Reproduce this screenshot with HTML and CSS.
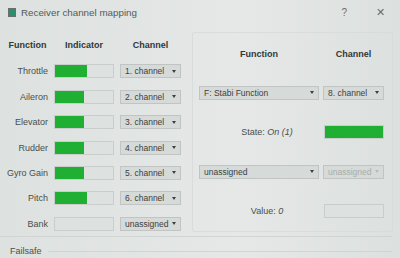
FILE: index.html
```html
<!DOCTYPE html>
<html lang="en">
<head>
    <meta charset="UTF-8">
    <title>Receiver channel mapping</title>
    <link rel="stylesheet" href="styles.css">
</head>
<body>
    <div class="window">
        <!-- Title bar -->
        <div class="titlebar">
            <span class="app-icon"></span>
            <span class="title">Receiver channel mapping</span>
            <span class="tb-btn help">?</span>
            <span class="tb-btn close">&#x2715;</span>
        </div>

        <div class="content">
            <!-- Channel mapping -->
            <div class="mapping">
                <div class="head">Function</div>
                <div class="head">Indicator</div>
                <div class="head">Channel</div>

                <div class="label">Throttle</div>
                <div class="bar"><div class="fill" style="width: 55%"></div></div>
                <div class="combo"><span>1. channel</span><i></i></div>

                <div class="label">Aileron</div>
                <div class="bar"><div class="fill" style="width: 50%"></div></div>
                <div class="combo"><span>2. channel</span><i></i></div>

                <div class="label">Elevator</div>
                <div class="bar"><div class="fill" style="width: 50%"></div></div>
                <div class="combo"><span>3. channel</span><i></i></div>

                <div class="label">Rudder</div>
                <div class="bar"><div class="fill" style="width: 50%"></div></div>
                <div class="combo"><span>4. channel</span><i></i></div>

                <div class="label">Gyro Gain</div>
                <div class="bar"><div class="fill" style="width: 50%"></div></div>
                <div class="combo"><span>5. channel</span><i></i></div>

                <div class="label">Pitch</div>
                <div class="bar"><div class="fill" style="width: 55%"></div></div>
                <div class="combo"><span>6. channel</span><i></i></div>

                <div class="label">Bank</div>
                <div class="bar"></div>
                <div class="combo"><span>unassigned</span><i></i></div>
            </div>

            <!-- Extra functions -->
            <div class="functions">
                <div class="head">Function</div>
                <div class="head">Channel</div>

                <div class="combo"><span>F: Stabi Function</span><i></i></div>
                <div class="combo"><span>8. channel</span><i></i></div>

                <div class="state">State: <em>On (1)</em></div>
                <div class="bar"><div class="fill" style="width: 100%"></div></div>

                <div class="combo"><span>unassigned</span><i></i></div>
                <div class="combo disabled"><span>unassigned</span><i></i></div>

                <div class="state">Value: <em>0</em></div>
                <div class="bar"></div>
            </div>
        </div>

        <div class="failsafe">
            <span>Failsafe</span>
        </div>
    </div>
</body>
</html>
```

FILE: styles.css
```css
* {
    margin: 0;
    padding: 0;
    box-sizing: border-box;
}

body {
    width: 400px;
    height: 258px;
    overflow: hidden;
    background: #e0e4e2;
    font-family: 'Liberation Sans', Arial, sans-serif;
    font-size: 9px;
    color: #4a4f4d;
}

.window {
    height: 258px;
    background: linear-gradient(to right, #dde1df, #e5e8e7 60%, #dce0de);
}

/* Title bar */
.titlebar {
    height: 24px;
    display: flex;
    align-items: center;
    padding-left: 8px;
}

.app-icon {
    width: 8px;
    height: 9px;
    border: 1px solid #6a6f6d;
    background: #2f8d6f;
    margin-right: 5px;
}

.title {
    flex: 1;
    font-size: 9.8px;
    color: #555a58;
}

.tb-btn {
    color: #6a6f6c;
    font-size: 10px;
}

.help {
    margin-right: 29px;
}

.close {
    margin-right: 15px;
    font-size: 11px;
}

.content {
    display: flex;
    height: 213px;
    padding: 17px 8px 0 7px;
    gap: 11px;
    border-bottom: 1px solid #d0d4d2;
    margin: 0 8px 0 0;
}

.head {
    font-weight: bold;
    color: #333836;
    text-align: center;
}

/* Left grid */
.mapping {
    display: grid;
    grid-template-columns: 41px 60px 61px;
    grid-template-rows: 12px repeat(7, 14px);
    column-gap: 6px;
    row-gap: 11.4px;
    align-items: center;
    align-content: start;
}

.mapping .head {
    margin-bottom: 5px;
}

.label {
    text-align: right;
}

.bar {
    height: 14px;
    background: #dde1df;
    border: 1px solid #c9cdcb;
}

.fill {
    height: 100%;
    background: #1faf33;
}

.combo {
    height: 14px;
    display: flex;
    align-items: center;
    padding: 0 4px;
    background: #d6dad8;
    border: 1px solid #c0c4c2;
    color: #3c413f;
    font-size: 8.5px;
}

.combo span {
    flex: 1;
    white-space: nowrap;
}

.combo i {
    width: 0;
    height: 0;
    border-left: 2px solid transparent;
    border-right: 2px solid transparent;
    border-top: 3px solid #3c413f;
}

.combo.disabled {
    color: #a8adab;
}

.combo.disabled i {
    border-top-color: #b6bbb9;
}

/* Right group */
.functions {
    flex: 1;
    display: grid;
    grid-template-columns: 120px 61px;
    grid-template-rows: 14px 14px 14px 14px 14px;
    column-gap: 4px;
    row-gap: 25.5px;
    align-items: center;
    align-content: start;
    padding: 13px 8px 0 6px;
    height: 200px;
    border: 1px solid #d8dcda;
    border-radius: 2px;
    margin-top: -9px;
}

.functions .head {
    margin-top: 2px;
}

.state {
    text-align: center;
    padding-left: 16px;
}

.state em {
    font-style: italic;
}

.functions .bar {
    margin-left: 1px;
}

/* Failsafe group title */
.failsafe {
    display: flex;
    align-items: center;
    gap: 6px;
    padding: 9px 8px 0 10px;
}

.failsafe::after {
    content: '';
    flex: 1;
    height: 1px;
    background: #d0d4d2;
}
```
